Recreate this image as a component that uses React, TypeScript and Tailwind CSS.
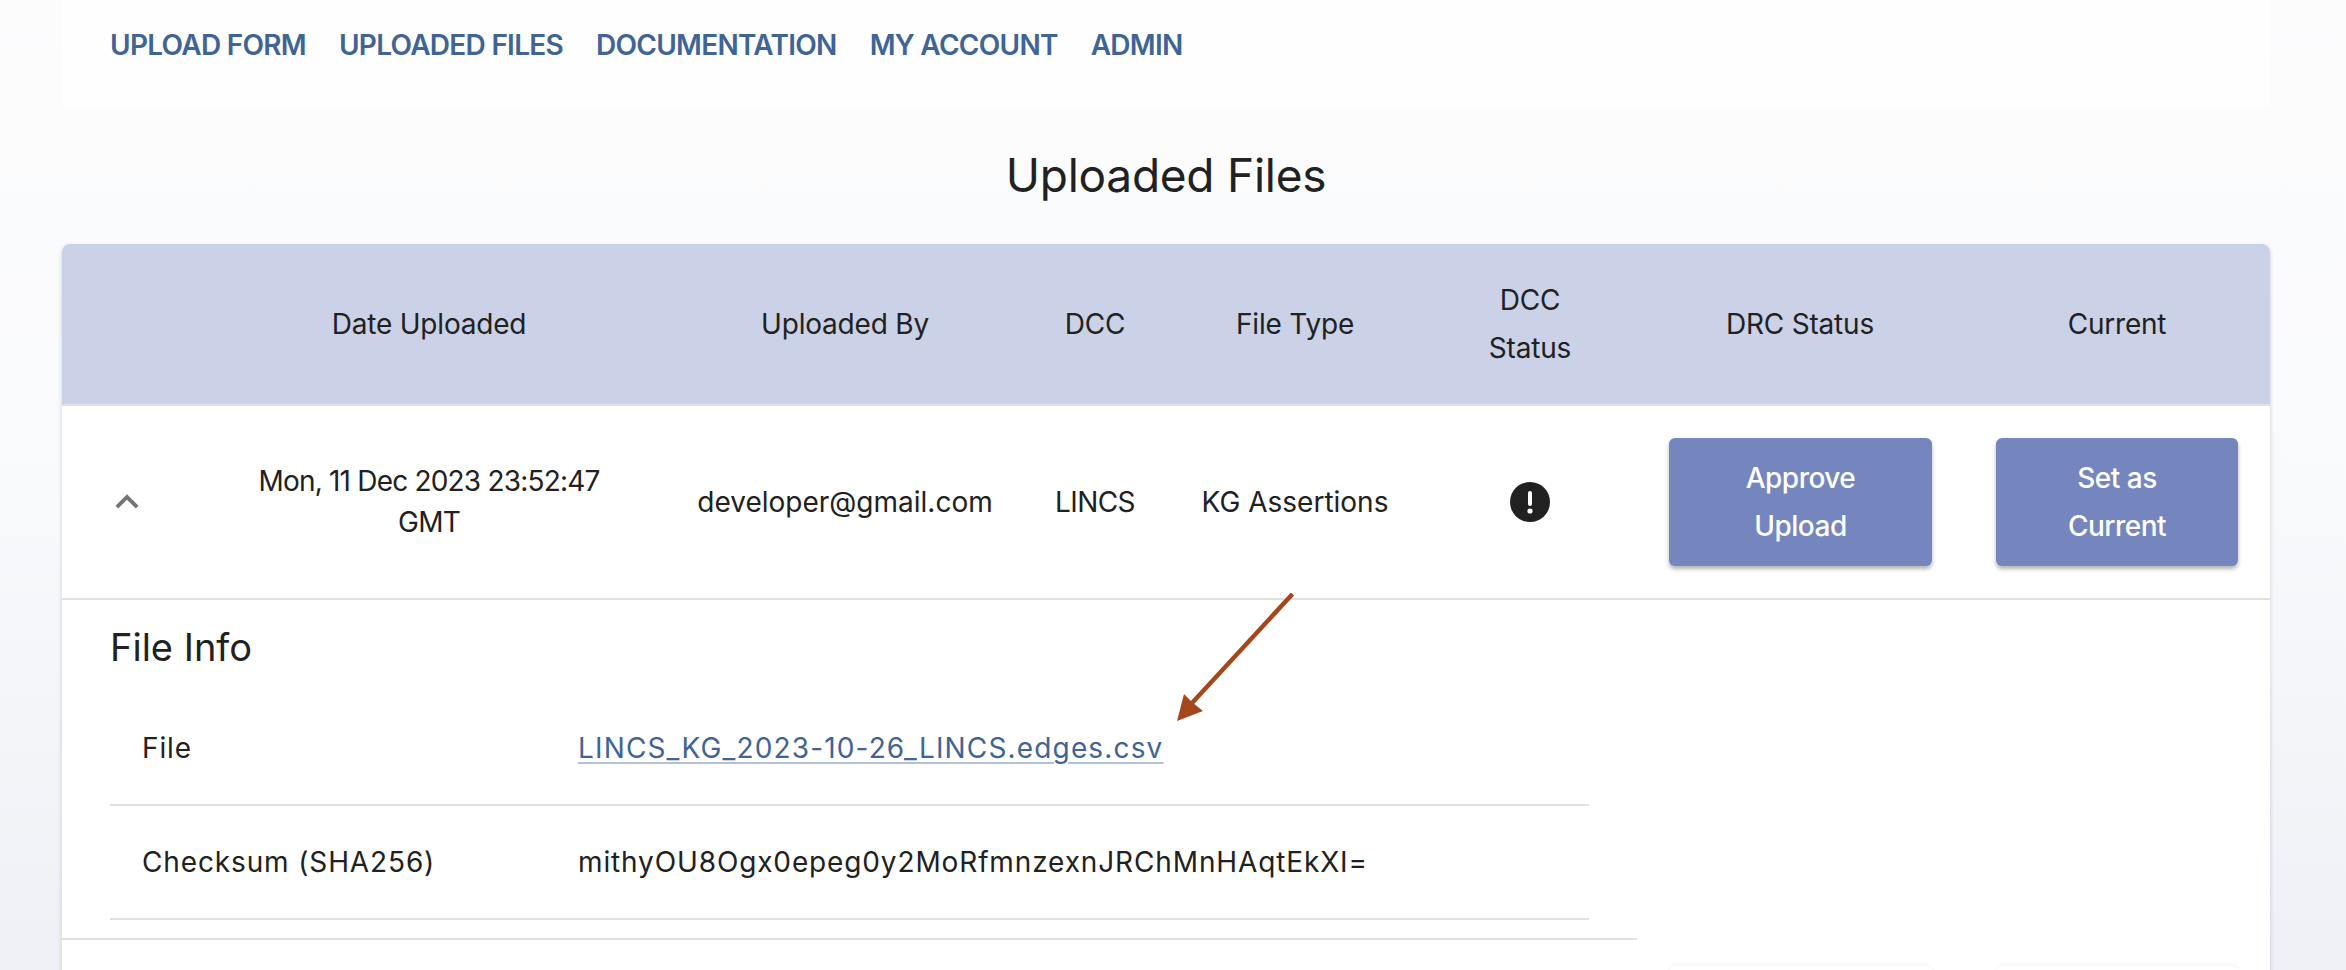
import React from "react";

const FONT = "font-['Inter','Noto_Sans',sans-serif]";
const COLS = "grid-cols-[130px_474px_358px_142px_258px_212px_328px_306px]";

function Arrow() {
  return (
    <svg className="absolute left-[1170px] top-[585px] pointer-events-none" width="130" height="142" viewBox="0 0 130 142">
      <line x1="122.5" y1="9" x2="22" y2="118" stroke="#a4471b" strokeWidth="4.5" />
      <polygon points="7,136 14,109 23,118 33,126" fill="#a4471b" />
    </svg>
  );
}

export default function App() {
  return (
    <div className={`relative h-[970px] overflow-hidden bg-gradient-to-b from-[#fcfcfd] via-[#f9fafc] to-[#eef0f6] ${FONT} text-[#212121]`}>
      <div className="pl-[62px] pr-[76px]">
        <nav className="flex h-[107px] items-start gap-[33px] bg-[#fefefe] pl-[48px] pt-[28px] text-[28px] font-semibold leading-[34px] tracking-[-0.72px] text-[#3f6495]">
          <span>UPLOAD FORM</span>
          <span>UPLOADED FILES</span>
          <span>DOCUMENTATION</span>
          <span>MY ACCOUNT</span>
          <span>ADMIN</span>
        </nav>

        <h1 className="flex h-[137px] items-center justify-center text-[46px] font-normal tracking-[-0.25px]">Uploaded Files</h1>

        <div className="h-[800px] overflow-hidden rounded-t-[8px] bg-white shadow-[0_2px_4px_rgba(60,70,110,0.25)]">
          <div className={`grid h-[162px] ${COLS} items-center border-b-2 border-[#e0e0e0] bg-[#cbd1e6] text-center text-[28px] leading-[48px] tracking-[-0.2px]`}>
            <div />
            <div>Date Uploaded</div>
            <div>Uploaded By</div>
            <div>DCC</div>
            <div>File Type</div>
            <div>DCC<br />Status</div>
            <div>DRC Status</div>
            <div>Current</div>
          </div>

          <div className={`grid h-[194px] ${COLS} items-center border-b-2 border-[#e0e0e0] text-center text-[28px] leading-[41px]`}>
            <div className="flex justify-center">
              <svg width="46" height="46" viewBox="0 0 24 24" fill="#757575">
                <path d="M7.41 15.41 12 10.83l4.59 4.58L18 14l-6-6-6 6z" />
              </svg>
            </div>
            <div className="px-[50px] tracking-[-0.8px]">Mon, 11 Dec 2023 23:52:47 GMT</div>
            <div>developer@gmail.com</div>
            <div className="tracking-[-0.6px]">LINCS</div>
            <div>KG Assertions</div>
            <div className="flex justify-center">
              <svg width="40" height="40" viewBox="0 0 40 40">
                <circle cx="20" cy="20" r="20" fill="#212121" />
                <rect x="18" y="9" width="4" height="15" rx="2" fill="#fff" />
                <circle cx="20" cy="29" r="2.6" fill="#fff" />
              </svg>
            </div>
            <div className="pl-[33px] pr-[32px]">
              <button className="h-[128px] w-full rounded-[6px] bg-[#7586bf] text-[28px] font-medium leading-[48px] tracking-[-0.5px] text-white shadow-[0_3px_4px_rgba(0,0,0,0.3)]">Approve<br />Upload</button>
            </div>
            <div className="px-[32px]">
              <button className="h-[128px] w-full rounded-[6px] bg-[#7586bf] text-[28px] font-medium leading-[48px] tracking-[-0.5px] text-white shadow-[0_3px_4px_rgba(0,0,0,0.3)]">Set as<br />Current</button>
            </div>
          </div>

          <div className="w-[1575px] border-b-2 border-[#e0e0e0] px-[48px]">
            <h2 className="flex h-[92px] items-center pt-[2px] text-[38px] font-normal leading-[48px]">File Info</h2>
            <div className="grid h-[114px] grid-cols-[436px_1fr] items-center border-b-2 border-[#e0e0e0] pl-[32px] text-[28px] tracking-[0.9px]">
              <div>File</div>
              <a className="justify-self-start tracking-[1.15px] text-[#3f6495] underline decoration-[#3f6495]/40 decoration-2 underline-offset-[4px]">LINCS_KG_2023-10-26_LINCS.edges.csv</a>
            </div>
            <div className="grid h-[114px] grid-cols-[436px_1fr] items-center border-b-2 border-[#e0e0e0] pl-[32px] text-[28px] tracking-[0.87px]">
              <div>Checksum (SHA256)</div>
              <div>mithyOU8Ogx0epeg0y2MoRfmnzexnJRChMnHAqtEkXI=</div>
            </div>
            <div className="h-[18px]" />
          </div>

          <div className={`grid ${COLS} pt-[26px]`}>
            <div className="col-span-6" />
            <div className="pl-[33px] pr-[32px]">
              <div className="h-[60px] rounded-[6px] bg-white shadow-[0_-1px_5px_rgba(0,0,0,0.06)]" />
            </div>
            <div className="px-[32px]">
              <div className="h-[60px] rounded-[6px] bg-white shadow-[0_-1px_5px_rgba(0,0,0,0.06)]" />
            </div>
          </div>
        </div>
      </div>
      <Arrow />
    </div>
  );
}
